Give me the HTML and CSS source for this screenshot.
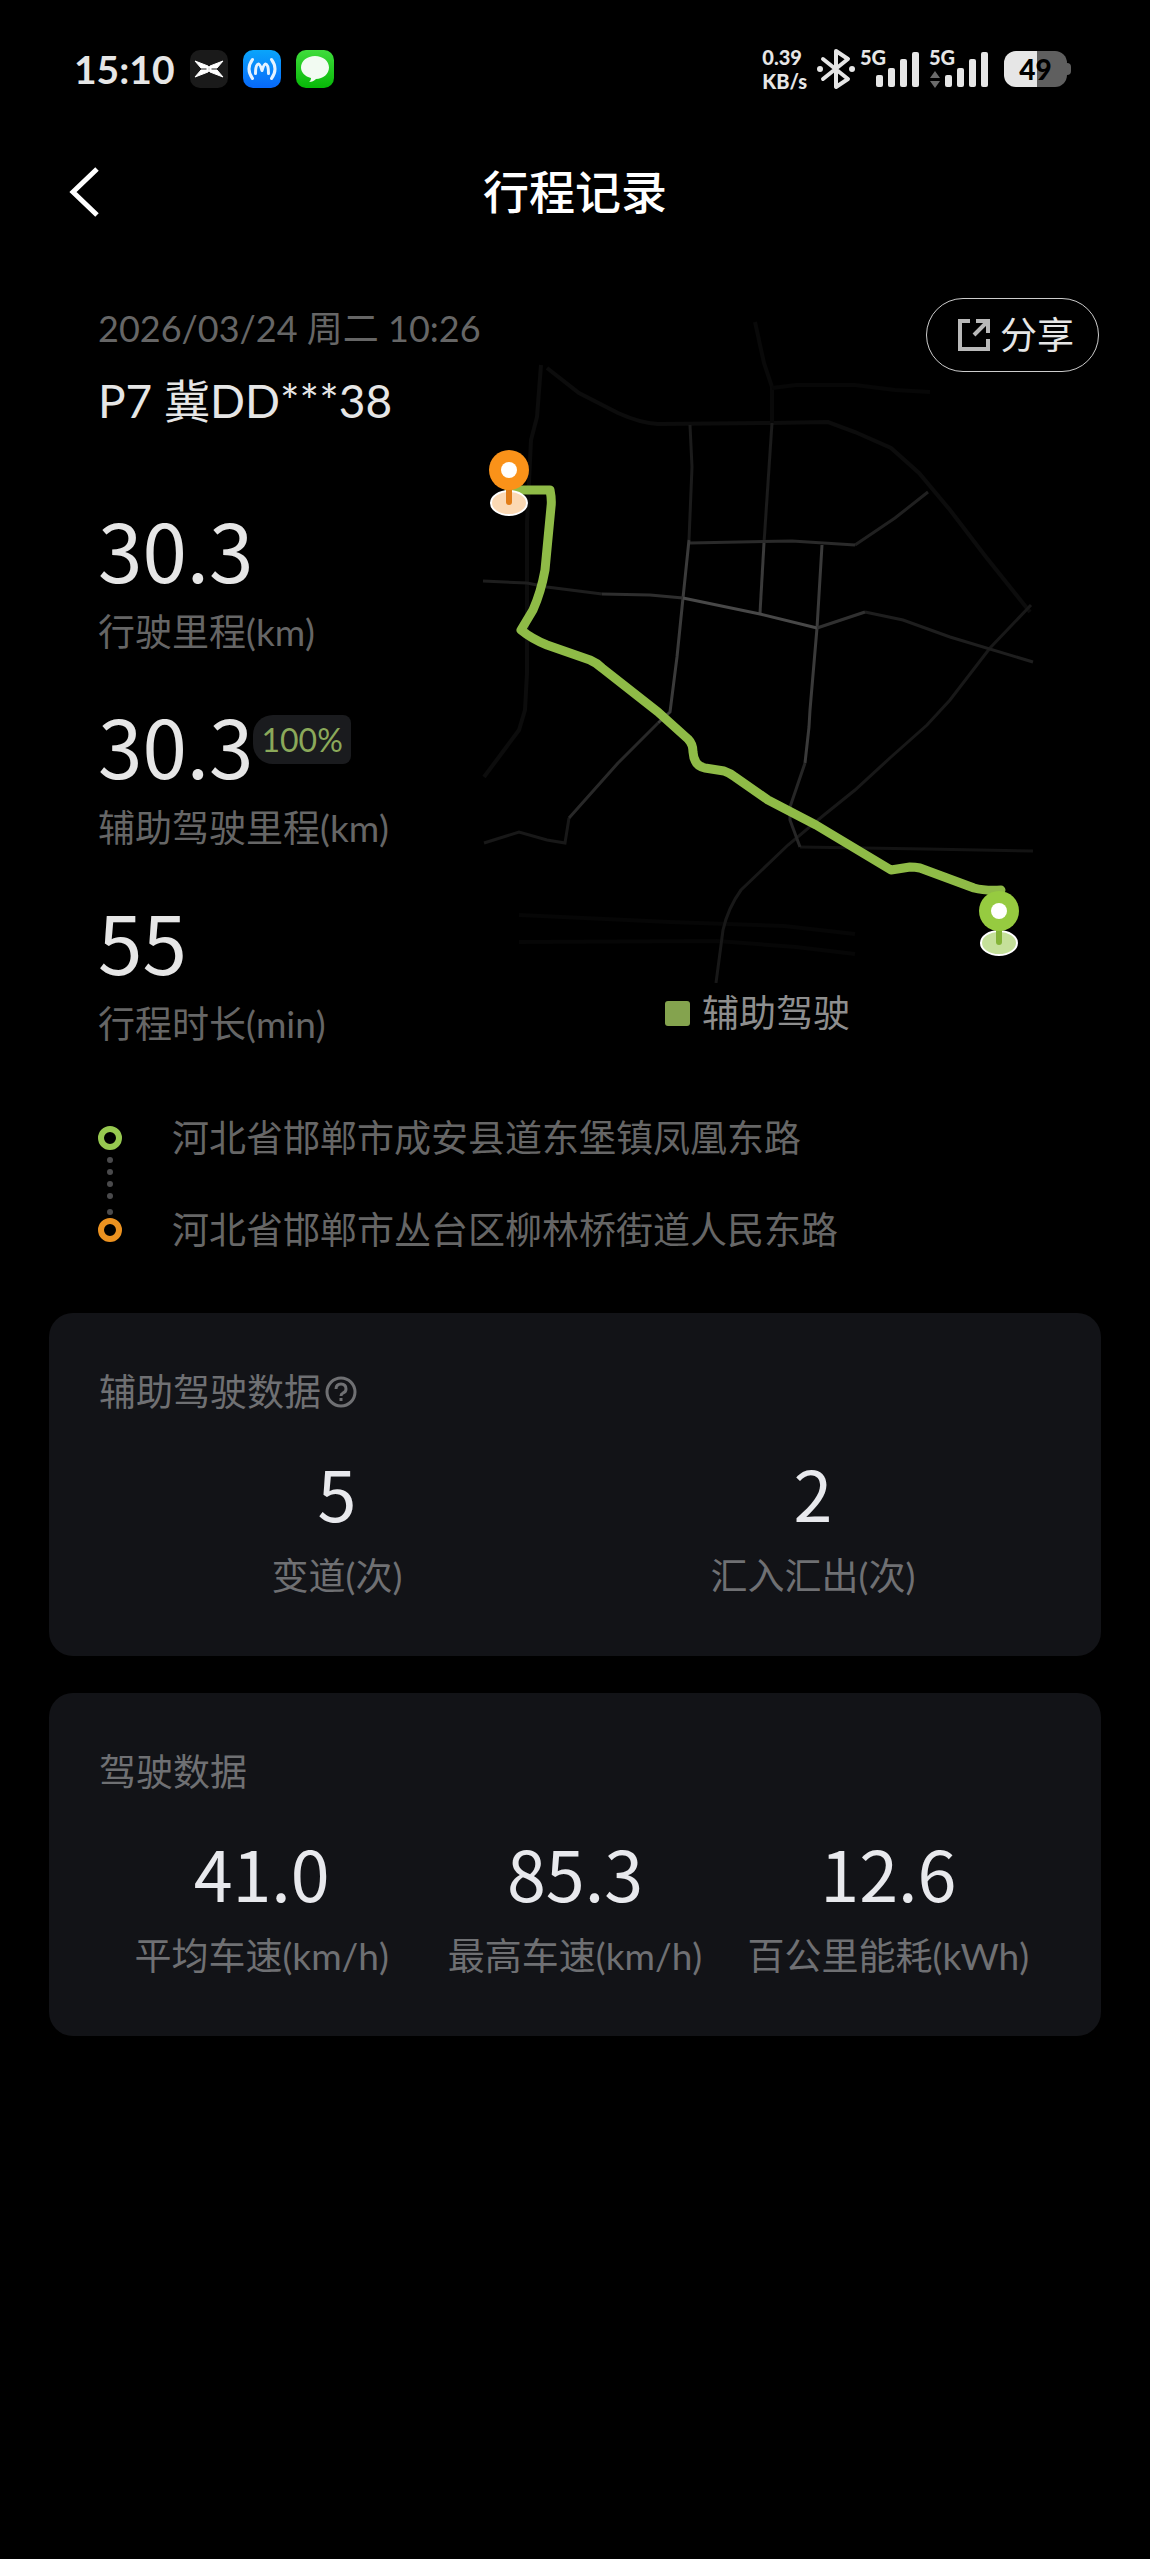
FILE: index.html
```html
<!DOCTYPE html>
<html lang="zh-CN">
<head>
    <meta charset="UTF-8">
    <meta name="viewport" content="width=device-width, initial-scale=1.0">
    <title>行程记录</title>
    <link rel="stylesheet" href="styles.css">
</head>
<body>

    <!-- Status bar -->
    <div class="status-bar">
        <div class="status-left">
            <span class="status-time">15:10</span>
            <svg class="app-icon" viewBox="0 0 38 38">
                <rect width="38" height="38" rx="10" fill="#1a1a1a"/>
                <path d="M5 11l13 5 2 3-2 3L5 27l6-7h6v-2h-6zM33 11l-13 5-2 3 2 3L33 27l-6-7h-6v-2h6z" fill="#fff" stroke="#fff" stroke-width="1"/>
            </svg>
            <svg class="app-icon" viewBox="0 0 38 38">
                <defs>
                    <linearGradient id="blue" x1="0" y1="0" x2="0" y2="1">
                        <stop offset="0" stop-color="#0aa5fb"/>
                        <stop offset="1" stop-color="#0768fa"/>
                    </linearGradient>
                </defs>
                <rect width="38" height="38" rx="10" fill="url(#blue)"/>
                <g fill="none" stroke="#e4f2ff" stroke-width="3" stroke-linecap="round" stroke-linejoin="round">
                    <path d="M9.500 9.500Q2.500 19 9.500 28.500M28.500 9.500Q35.500 19 28.500 28.500"/>
                    <path d="M12.500 23.500q0-9 3-9.500 1.500 0 3.500 6.500 2-6.500 3.500-6.500 3 .5 3 9.500"/>
                </g>
            </svg>
            <svg class="app-icon" viewBox="0 0 38 38">
                <defs>
                    <linearGradient id="green" x1="0" y1="0" x2="0" y2="1">
                        <stop offset="0" stop-color="#3fdc3c"/>
                        <stop offset="1" stop-color="#06b807"/>
                    </linearGradient>
                </defs>
                <rect width="38" height="38" rx="10" fill="url(#green)"/>
                <path d="M19 6c8 0 14 5 14 11.500S27 29 20 29c-2 2-4 3-7 3 1.500-1 2-2.500 2-4C9 26.500 5 22.500 5 17.500 5 11 11 6 19 6z" fill="#f2fbf2"/>
            </svg>
        </div>
        <div class="status-right">
            <div class="net-speed">0.39<br>KB/s</div>
            <svg class="bluetooth" width="40" height="42" viewBox="0 0 40 42">
                <path d="M7 11l25 20-12 8V3l12 8L7 31" fill="none" stroke="#e6e6e6" stroke-width="4" stroke-linecap="round" stroke-linejoin="round"/>
                <circle cx="4" cy="21" r="3" fill="#e6e6e6"/>
                <circle cx="36" cy="21" r="3" fill="#e6e6e6"/>
            </svg>
            <div class="signal">
                <span class="signal-text">5G</span>
                <svg width="60" height="42" viewBox="0 0 60 42" fill="#e6e6e6">
                    <rect x="16" y="27" width="7" height="12" rx="2"/>
                    <rect x="28" y="20" width="7" height="19" rx="2"/>
                    <rect x="40" y="11" width="7" height="28" rx="2"/>
                    <rect x="52" y="4" width="7" height="35" rx="2"/>
                </svg>
            </div>
            <div class="signal">
                <span class="signal-text">5G</span>
                <svg width="60" height="42" viewBox="0 0 60 42" fill="#e6e6e6">
                    <path d="M1 30l5-7 5 7zM1 33l5 7 5-7z" fill="#6b6b6b"/>
                    <rect x="16" y="27" width="7" height="12" rx="2"/>
                    <rect x="28" y="20" width="7" height="19" rx="2"/>
                    <rect x="40" y="11" width="7" height="28" rx="2"/>
                    <rect x="52" y="4" width="7" height="35" rx="2"/>
                </svg>
            </div>
            <div class="battery">49</div>
        </div>
    </div>

    <!-- Header -->
    <header class="page-header">
        <button class="back-btn" type="button" aria-label="返回">
            <svg width="32" height="52" viewBox="0 0 32 52">
                <path d="M30 3L6 26l24 23" fill="none" stroke="#fff" stroke-width="5"/>
            </svg>
        </button>
        <h1>行程记录</h1>
    </header>

    <main>
        <!-- Trip summary -->
        <section class="trip">
            <button class="share-btn" type="button">
                <svg width="34" height="34" viewBox="0 0 34 34">
                    <path d="M13 3H3v28h28V21M19 3h12v12M31 3L17 17" fill="none" stroke="#b9b9b9" stroke-width="4"/>
                </svg>
                分享
            </button>

            <div class="trip-info">
                <div class="trip-date">2026/03/24 周二 10:26</div>
                <div class="trip-car">P7 冀DD***38</div>

                <div class="stat-list">
                    <div class="stat">
                        <div class="stat-value">30.3</div>
                        <div class="stat-label">行驶里程(km)</div>
                    </div>
                    <div class="stat">
                        <div class="stat-value">30.3<span class="badge">100%</span></div>
                        <div class="stat-label">辅助驾驶里程(km)</div>
                    </div>
                    <div class="stat">
                        <div class="stat-value">55</div>
                        <div class="stat-label">行程时长(min)</div>
                    </div>
                </div>
            </div>

            <div class="trip-map">
                <svg class="map" viewBox="480 303 555 680">
                    <!-- roads, outer ones are dimmer -->
                    <g fill="none" stroke-width="4" stroke="#0c0c0c">
                        <path d="M541 365L537 417 531 440 527 523V673L525 710 519 730 484 777"/>
                        <path d="M547 368L579 393 618 413Q640 423 658 424L772 423 828 422 855 432 891 448 919 473 950 510 986 557 1030 612"/>
                        <path d="M755 322L764 363 772 387V423" stroke="#090909"/>
                        <path d="M772 388L796 385H855L895 390 930 392" stroke="#070707"/>
                        <path d="M519 915L670 922 784 926 855 934M519 942L717 941 796 947 855 954" stroke="#060606"/>
                    </g>
                    <g fill="none" stroke-width="3" stroke="#1b1b1b">
                        <path d="M772 423L764 543"/>
                        <path d="M690 425L692 467 689 540"/>
                        <path d="M855 545L895 518 928 492" stroke="#202020"/>
                        <path d="M1031 605L990 648 950 700 927 725 891 757 855 790 824 815 788 845 741 890Q728 908 723 930L716 983" stroke="#181818"/>
                        <path d="M800 847L926 849 1033 851" stroke="#131313"/>
                        <path d="M569 818L565 843 547 840 519 832 484 843" stroke="#181818"/>
                        <path d="M483 581L527 583 547 587 602 594" stroke="#1e1e1e"/>
                        <path d="M865 612L903 620 950 637 1033 662" stroke="#1e1e1e"/>
                    </g>
                    <g fill="none" stroke-width="3" stroke="#3a3a3a" stroke-linejoin="round">
                        <path d="M690 543L792 541 855 545" stroke="#2a2a2a"/>
                        <path d="M689 540L683 598 677 657 670 712 658 723"/>
                        <path d="M658 723L618 763 569 818" stroke="#282828"/>
                        <path d="M764 543L760 613"/>
                        <path d="M822 545L817 628 810 710 809 727 805 763"/>
                        <path d="M805 763L790 807V820L800 847" stroke="#262626"/>
                        <path d="M602 594L650 595 683 598" stroke="#2e2e2e"/>
                        <path d="M683 598L760 614 817 628" stroke="#484848"/>
                        <path d="M817 628L865 612" stroke="#303030"/>
                    </g>
                    <!-- driven route -->
                    <path d="M509 490H550Q552 500 551 507L545 570Q541 592 533 610L521 630Q532 639 547 645L590 660Q597 663 602 668L658 712 688 739Q693 744 693 752 694 766 705 768L724 771Q730 773 735 777L768 800 816 825 891 870 910 867Q915 867 920 868L974 888Q985 891 1001 890" fill="none" stroke="#8fbb47" stroke-width="9" stroke-linejoin="round" stroke-linecap="round"/>
                    <g>
                        <ellipse cx="509" cy="503" rx="18" ry="12" fill="#fbd9b4" stroke="#fff" stroke-width="2"/>
                        <path d="M509 488V502" stroke="#e27d17" stroke-width="6" stroke-linecap="round"/>
                        <circle cx="509" cy="470" r="20" fill="#fa9219"/>
                        <circle cx="509" cy="470" r="8" fill="#fff"/>
                    </g>
                    <g>
                        <ellipse cx="999" cy="943" rx="18" ry="12" fill="#c5e09a" stroke="#fff" stroke-width="2"/>
                        <path d="M999 928V942" stroke="#84b437" stroke-width="6" stroke-linecap="round"/>
                        <circle cx="999" cy="911" r="20" fill="#96cb40"/>
                        <circle cx="999" cy="911" r="8" fill="#fff"/>
                    </g>
                </svg>
                <div class="legend"><span class="legend-color"></span>辅助驾驶</div>
            </div>
        </section>

        <!-- Start and end address -->
        <section class="route">
            <svg class="route-line" width="26" height="118" viewBox="0 0 26 118">
                <circle cx="13" cy="13" r="9" fill="none" stroke="#97c950" stroke-width="6"/>
                <g fill="#4a4a4c">
                    <circle cx="13" cy="35" r="3"/>
                    <circle cx="13" cy="47" r="3"/>
                    <circle cx="13" cy="59" r="3"/>
                    <circle cx="13" cy="71" r="3"/>
                    <circle cx="13" cy="87" r="3"/>
                </g>
                <circle cx="13" cy="105" r="9" fill="none" stroke="#ec9220" stroke-width="6"/>
            </svg>
            <div class="route-list">
                <div>河北省邯郸市成安县道东堡镇凤凰东路</div>
                <div>河北省邯郸市丛台区柳林桥街道人民东路</div>
            </div>
        </section>

        <section class="card">
            <h2>辅助驾驶数据
                <svg width="32" height="32" viewBox="0 0 32 32" fill="none" stroke="#6f7073" stroke-width="3">
                    <circle cx="16" cy="16" r="14"/>
                    <path d="M11 13q0-5 5-5t5 5q0 3-3 4-2 1-2 3"/>
                    <path d="M16 22v3"/>
                </svg>
            </h2>
            <div class="data-row">
                <div class="data-item">
                    <div class="data-value">5</div>
                    <div class="data-label">变道(次)</div>
                </div>
                <div class="data-item">
                    <div class="data-value">2</div>
                    <div class="data-label">汇入汇出(次)</div>
                </div>
            </div>
        </section>

        <section class="card">
            <h2>驾驶数据</h2>
            <div class="data-row data-row-three">
                <div class="data-item">
                    <div class="data-value">41.0</div>
                    <div class="data-label">平均车速(km/h)</div>
                </div>
                <div class="data-item">
                    <div class="data-value">85.3</div>
                    <div class="data-label">最高车速(km/h)</div>
                </div>
                <div class="data-item">
                    <div class="data-value">12.6</div>
                    <div class="data-label">百公里能耗(kWh)</div>
                </div>
            </div>
        </section>
    </main>

</body>
</html>
```

FILE: styles.css
```css
/* Theme variables */
:root {
    --bg-primary: #000;
    --card-bg: #121317;
    --text-primary: #e6e6e6;
    --text-muted: #666;
    --text-card: #6f7073;
    --accent-green: #8ba95a;
    --font-text: Lato, 'Noto Sans CJK SC', sans-serif;
    --font-number: 'Noto Sans CJK SC', sans-serif;
}

* {
    box-sizing: border-box;
}

body {
    margin: 0;
    background: var(--bg-primary);
    color: var(--text-primary);
    font-family: var(--font-text);
    font-size: 37px;
    line-height: 50px;
}

svg {
    display: block;
    flex-shrink: 0;
}

button {
    padding: 0;
    border: none;
    background: none;
    color: inherit;
    font: inherit;
    cursor: pointer;
}

/* Status bar */
.status-bar {
    display: flex;
    justify-content: space-between;
    align-items: center;
    height: 46px;
    margin-top: 46px;
    padding: 0 83px 0 74px;
}

.status-left {
    display: flex;
    align-items: center;
    gap: 15px;
}

.status-time {
    font-size: 39px;
    font-weight: bold;
}

.app-icon {
    width: 38px;
    height: 38px;
}

.status-right {
    display: flex;
    align-items: center;
    gap: 9px;
}

.net-speed {
    font-size: 20px;
    font-weight: 900;
    line-height: 24px;
}

.signal {
    position: relative;
}

.signal-text {
    position: absolute;
    top: -3px;
    left: 0;
    font-size: 20px;
    font-weight: 900;
    line-height: 24px;
}

.bluetooth {
    margin-right: -5px;
}

.battery {
    position: relative;
    width: 63px;
    height: 36px;
    margin-left: 6px;
    border-radius: 12px;
    background: linear-gradient(to right, #e6e6e6 33px, #5f5f5f 33px);
    color: #000;
    font-size: 28px;
    font-weight: 900;
    line-height: 36px;
    text-align: center;
}

.battery::after {
    content: '';
    position: absolute;
    top: 12px;
    right: -4px;
    width: 4px;
    height: 12px;
    border-radius: 0 4px 4px 0;
    background: #5f5f5f;
}

/* Header */
.page-header {
    display: grid;
    grid-template-columns: 1fr auto 1fr;
    align-items: center;
    height: 92px;
    margin-top: 54px;
    padding: 0 67px;
}

.back-btn {
    justify-self: start;
}

.page-header h1 {
    margin: 0;
    color: #fff;
    font-size: 46px;
    font-weight: 500;
}

/* Trip summary */
.trip {
    position: relative;
    display: grid;
    grid-template-columns: 382px 1fr;
    align-items: start;
    padding: 65px 115px 0 98px;
}

.share-btn {
    position: absolute;
    top: 60px;
    right: 51px;
    display: flex;
    justify-content: center;
    align-items: center;
    gap: 9px;
    width: 173px;
    height: 74px;
    padding-left: 6px;
    border: 1px solid #ccc;
    border-radius: 37px;
    font-size: 37px;
}

.trip-date {
    color: var(--text-muted);
    font-size: 36px;
    white-space: nowrap;
}

.trip-car {
    margin-top: 18px;
    font-size: 46px;
    line-height: 60px;
}

.stat-list {
    display: flex;
    flex-direction: column;
    gap: 51px;
    margin-top: 81px;
}

.stat-value {
    display: flex;
    font-family: var(--font-number);
    font-size: 80px;
    line-height: 72px;
}

.stat-label {
    margin-top: 23px;
    color: var(--text-muted);
}

.badge {
    align-self: flex-start;
    height: 49px;
    margin-top: 7px;
    padding: 0 8px;
    border-radius: 20px 8px 8px 20px;
    background: #1a1b1e;
    color: var(--accent-green);
    font-family: var(--font-text);
    font-size: 32px;
    line-height: 49px;
}

.map {
    width: 100%;
}

.legend {
    display: flex;
    justify-content: center;
    align-items: center;
    gap: 12px;
    margin-top: 5px;
    color: #8e8e8e;
}

.legend-color {
    width: 25px;
    height: 25px;
    border-radius: 3px;
    background: #84a34e;
}

/* Addresses */
.route {
    display: flex;
    align-items: center;
    gap: 49px;
    padding: 64px 97px 58px;
    color: var(--text-muted);
}

.route-list {
    display: flex;
    flex-direction: column;
    gap: 42px;
}

/* Data cards */
.card {
    margin: 0 49px 37px;
    padding: 54px 50px 55px;
    border-radius: 24px;
    background: var(--card-bg);
}

.card h2 {
    display: flex;
    align-items: center;
    gap: 4px;
    margin: 0;
    color: var(--text-card);
    font-size: 37px;
    font-weight: normal;
}

.data-row {
    display: flex;
    margin-top: 39px;
}

.data-row-three {
    padding: 0 6px;
}

.data-item {
    flex: 1;
    text-align: center;
    white-space: nowrap;
}

.data-value {
    color: #e8e9ed;
    font-family: var(--font-number);
    font-size: 70px;
    line-height: 72px;
}

.data-label {
    margin-top: 23px;
    color: var(--text-card);
}
```
